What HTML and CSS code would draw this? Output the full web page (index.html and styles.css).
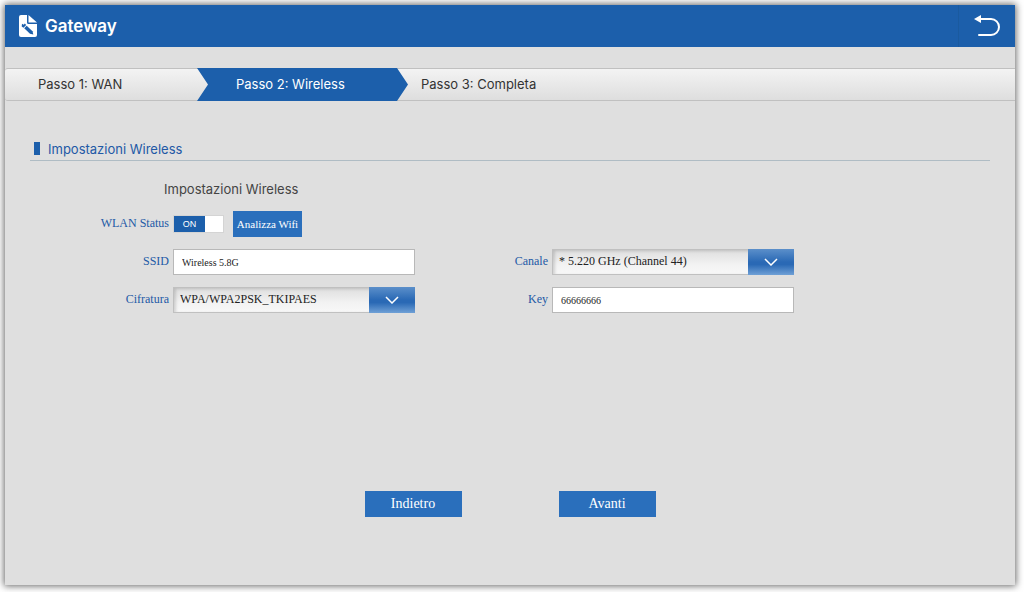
FILE: index.html
```html
<!DOCTYPE html>
<html lang="it">
<head>
<meta charset="utf-8">
<title>Gateway</title>
<link rel="stylesheet" href="styles.css">
</head>
<body>
<div class="panel">
  <header class="header">
    <svg class="logo" viewBox="0 0 18 22" aria-hidden="true">
      <path fill="#fff" d="M2 0h6v7.500a1.500 1.500 0 0 0 1.500 1.500H18v11a2 2 0 0 1-2 2H2a2 2 0 0 1-2-2V2a2 2 0 0 1 2-2z"/>
      <path fill="#fff" d="M9.500 0L18 7.500H9.500z"/>
      <path fill="#1c5fab" d="M3 8.800l1.800.9 1-1.200 1.400 1.600-2.700 2.700-1.800-1.300z"/>
      <path fill="#1c5fab" d="M5.200 13.200l2.500-2.500 5.800 5.500.8 3.300-3.300-.8z"/>
    </svg>
    <h1 class="title">Gateway</h1>
    <button class="back" type="button" aria-label="Indietro">
      <svg class="back-icon" viewBox="0 0 28 22" aria-hidden="true">
        <path fill="none" stroke="#fff" stroke-width="2" stroke-linecap="round" d="M6 4h12a8 8 0 0 1 0 16H6"/>
        <path fill="#fff" d="M1 4l7-4v8z"/>
      </svg>
    </button>
  </header>

  <nav>
    <ol class="steps">
      <li class="step">Passo 1: WAN</li>
      <li class="step step-current" aria-current="step">Passo 2: Wireless</li>
      <li class="step step-last">Passo 3: Completa</li>
    </ol>
  </nav>

  <main class="content">
    <h2 class="section-title">Impostazioni Wireless</h2>
    <form class="form">
      <h3 class="group-title">Impostazioni Wireless</h3>

      <label class="label" for="wlan">WLAN Status</label>
      <div class="status">
        <label class="switch">
          <input class="switch-input" id="wlan" type="checkbox" checked>
          <span class="switch-on">ON</span>
        </label>
        <button class="button button-small" type="button">Analizza Wifi</button>
      </div>

      <label class="label row-start" for="ssid">SSID</label>
      <input class="text" id="ssid" type="text" value="Wireless 5.8G">
      <label class="label" for="channel">Canale</label>
      <div class="select-box">
        <select class="select" id="channel"><option>* 5.220 GHz (Channel 44)</option></select>
        <svg class="chevron" viewBox="0 0 16 8" aria-hidden="true"><path d="M2 1l6 6 6-6"/></svg>
      </div>

      <label class="label" for="cipher">Cifratura</label>
      <div class="select-box">
        <select class="select" id="cipher"><option>WPA/WPA2PSK_TKIPAES</option></select>
        <svg class="chevron" viewBox="0 0 16 8" aria-hidden="true"><path d="M2 1l6 6 6-6"/></svg>
      </div>
      <label class="label" for="key">Key</label>
      <input class="text" id="key" type="text" value="66666666">
    </form>

    <div class="actions">
      <button class="button" type="button">Indietro</button>
      <button class="button" type="button">Avanti</button>
    </div>
  </main>
</div>
</body>
</html>
```
FILE: styles.css
```css
* { box-sizing: border-box; }

body {
  margin: 0;
  min-height: 100vh;
  padding: 5px 9px 7px 5px;
  display: flex;
  background: #fff;
  font-family: "Liberation Serif", "Times New Roman", serif;
}

h1, h2, h3 { margin: 0; font-weight: 400; }

button, input, select { font-family: inherit; border-radius: 0; margin: 0; }

.panel {
  flex: 1;
  display: flex;
  flex-direction: column;
  background: #dfdfdf;
  box-shadow: 0 0 7px 1px rgba(0, 0, 0, 0.6);
}

.header {
  display: flex;
  align-items: center;
  height: 42px;
  padding-left: 14px;
  background: #1c5fab;
  color: #fff;
}

.logo { width: 18px; height: 22px; }

.title {
  flex: 1;
  margin-left: 8px;
  font: 600 17px/20px Inter, sans-serif;
}

.back {
  width: 57px;
  height: 42px;
  padding: 0;
  border: 0;
  border-left: 1px solid #1a5a9f;
  background: none;
}

.back-icon { display: block; width: 28px; height: 22px; margin: 0 auto; }

.steps {
  display: flex;
  height: 33px;
  margin: 21px 0 0;
  padding: 0;
  list-style: none;
  border: 1px solid #c0c0c0;
  border-width: 1px 0;
  border-radius: 3px 0 0 3px;
  background: linear-gradient(#f3f3f3, #dedede);
}

.step {
  width: 192px;
  padding-left: 33px;
  font: 13px/30px Inter, sans-serif;
  color: #333;
}

.step-current {
  width: 211px;
  height: 33px;
  margin-top: -1px;
  padding-left: 39px;
  line-height: 32px;
  background: #1c5fab;
  color: #fff;
  clip-path: polygon(0 0, 200px 0, 100% 50%, 200px 100%, 0 100%, 11px 50%);
}

.step-last { flex: 1; padding-left: 13px; }

.content {
  flex: 1;
  display: flex;
  flex-direction: column;
  padding: 36px 25px 68px;
}

.section-title {
  display: flex;
  align-items: center;
  height: 24px;
  padding-left: 4px;
  border-bottom: 1px solid #afbcc4;
  font: 13px/20px Inter, sans-serif;
  color: #2259a6;
}

.section-title::before {
  content: "";
  width: 6px;
  height: 13px;
  margin-right: 8px;
  background: #1c5fab;
}

.form {
  display: grid;
  grid-template-columns: 139px 242px 129px 242px;
  gap: 12px 4px;
  align-items: center;
  padding-top: 18px;
}

.group-title {
  grid-column: 1 / -1;
  padding-left: 134px;
  font: 13px/20px Inter, sans-serif;
  color: #444;
}

.label {
  text-align: right;
  font-size: 12px;
  line-height: 24px;
  padding-bottom: 2px;
  color: #2259a6;
}

.row-start { grid-column: 1; }

.status { display: flex; align-items: center; gap: 9px; }

.switch {
  position: relative;
  width: 51px;
  height: 18px;
  border: 1px solid #d4d4d4;
  background: #fff;
}

.switch-input {
  position: absolute;
  inset: 0;
  width: 100%;
  height: 100%;
  margin: 0;
  opacity: 0;
}

.switch-on {
  display: block;
  width: 31px;
  background: #1c5fab;
  color: #fff;
  text-align: center;
  font: 9px/16px "Liberation Sans", Arial, sans-serif;
}

.button {
  width: 97px;
  height: 26px;
  padding: 0;
  border: 0;
  background: #2a6fbc;
  color: #fff;
  font-size: 14px;
}

.button-small { width: 69px; font-size: 11px; }

.text {
  width: 100%;
  height: 26px;
  padding: 0 8px;
  border: 1px solid #b8b8b8;
  background: #fff;
  color: #222;
  font-size: 10px;
}

.select-box { position: relative; height: 26px; }

.select {
  appearance: none;
  width: 100%;
  height: 26px;
  padding: 0 50px 2px 6px;
  border: 1px solid #c0c0c0;
  background: linear-gradient(#dedede, #f2f2f2 60%, #f8f8f8);
  box-shadow: inset 2px 1px 3px rgba(0, 0, 0, 0.15);
  color: #222;
  font-size: 12px;
}

.select-box::after {
  content: "";
  position: absolute;
  inset: 0 0 0 auto;
  width: 46px;
  background: linear-gradient(#5b8fca, #2a69b5 50%, #2a69b5 60%, #6fa0d6);
  pointer-events: none;
}

.chevron {
  position: absolute;
  z-index: 1;
  right: 15px;
  top: 9px;
  width: 16px;
  height: 8px;
  fill: none;
  stroke: #fff;
  stroke-width: 1.5;
  pointer-events: none;
}

.actions {
  display: flex;
  justify-content: center;
  gap: 97px;
  margin-top: auto;
}
```
